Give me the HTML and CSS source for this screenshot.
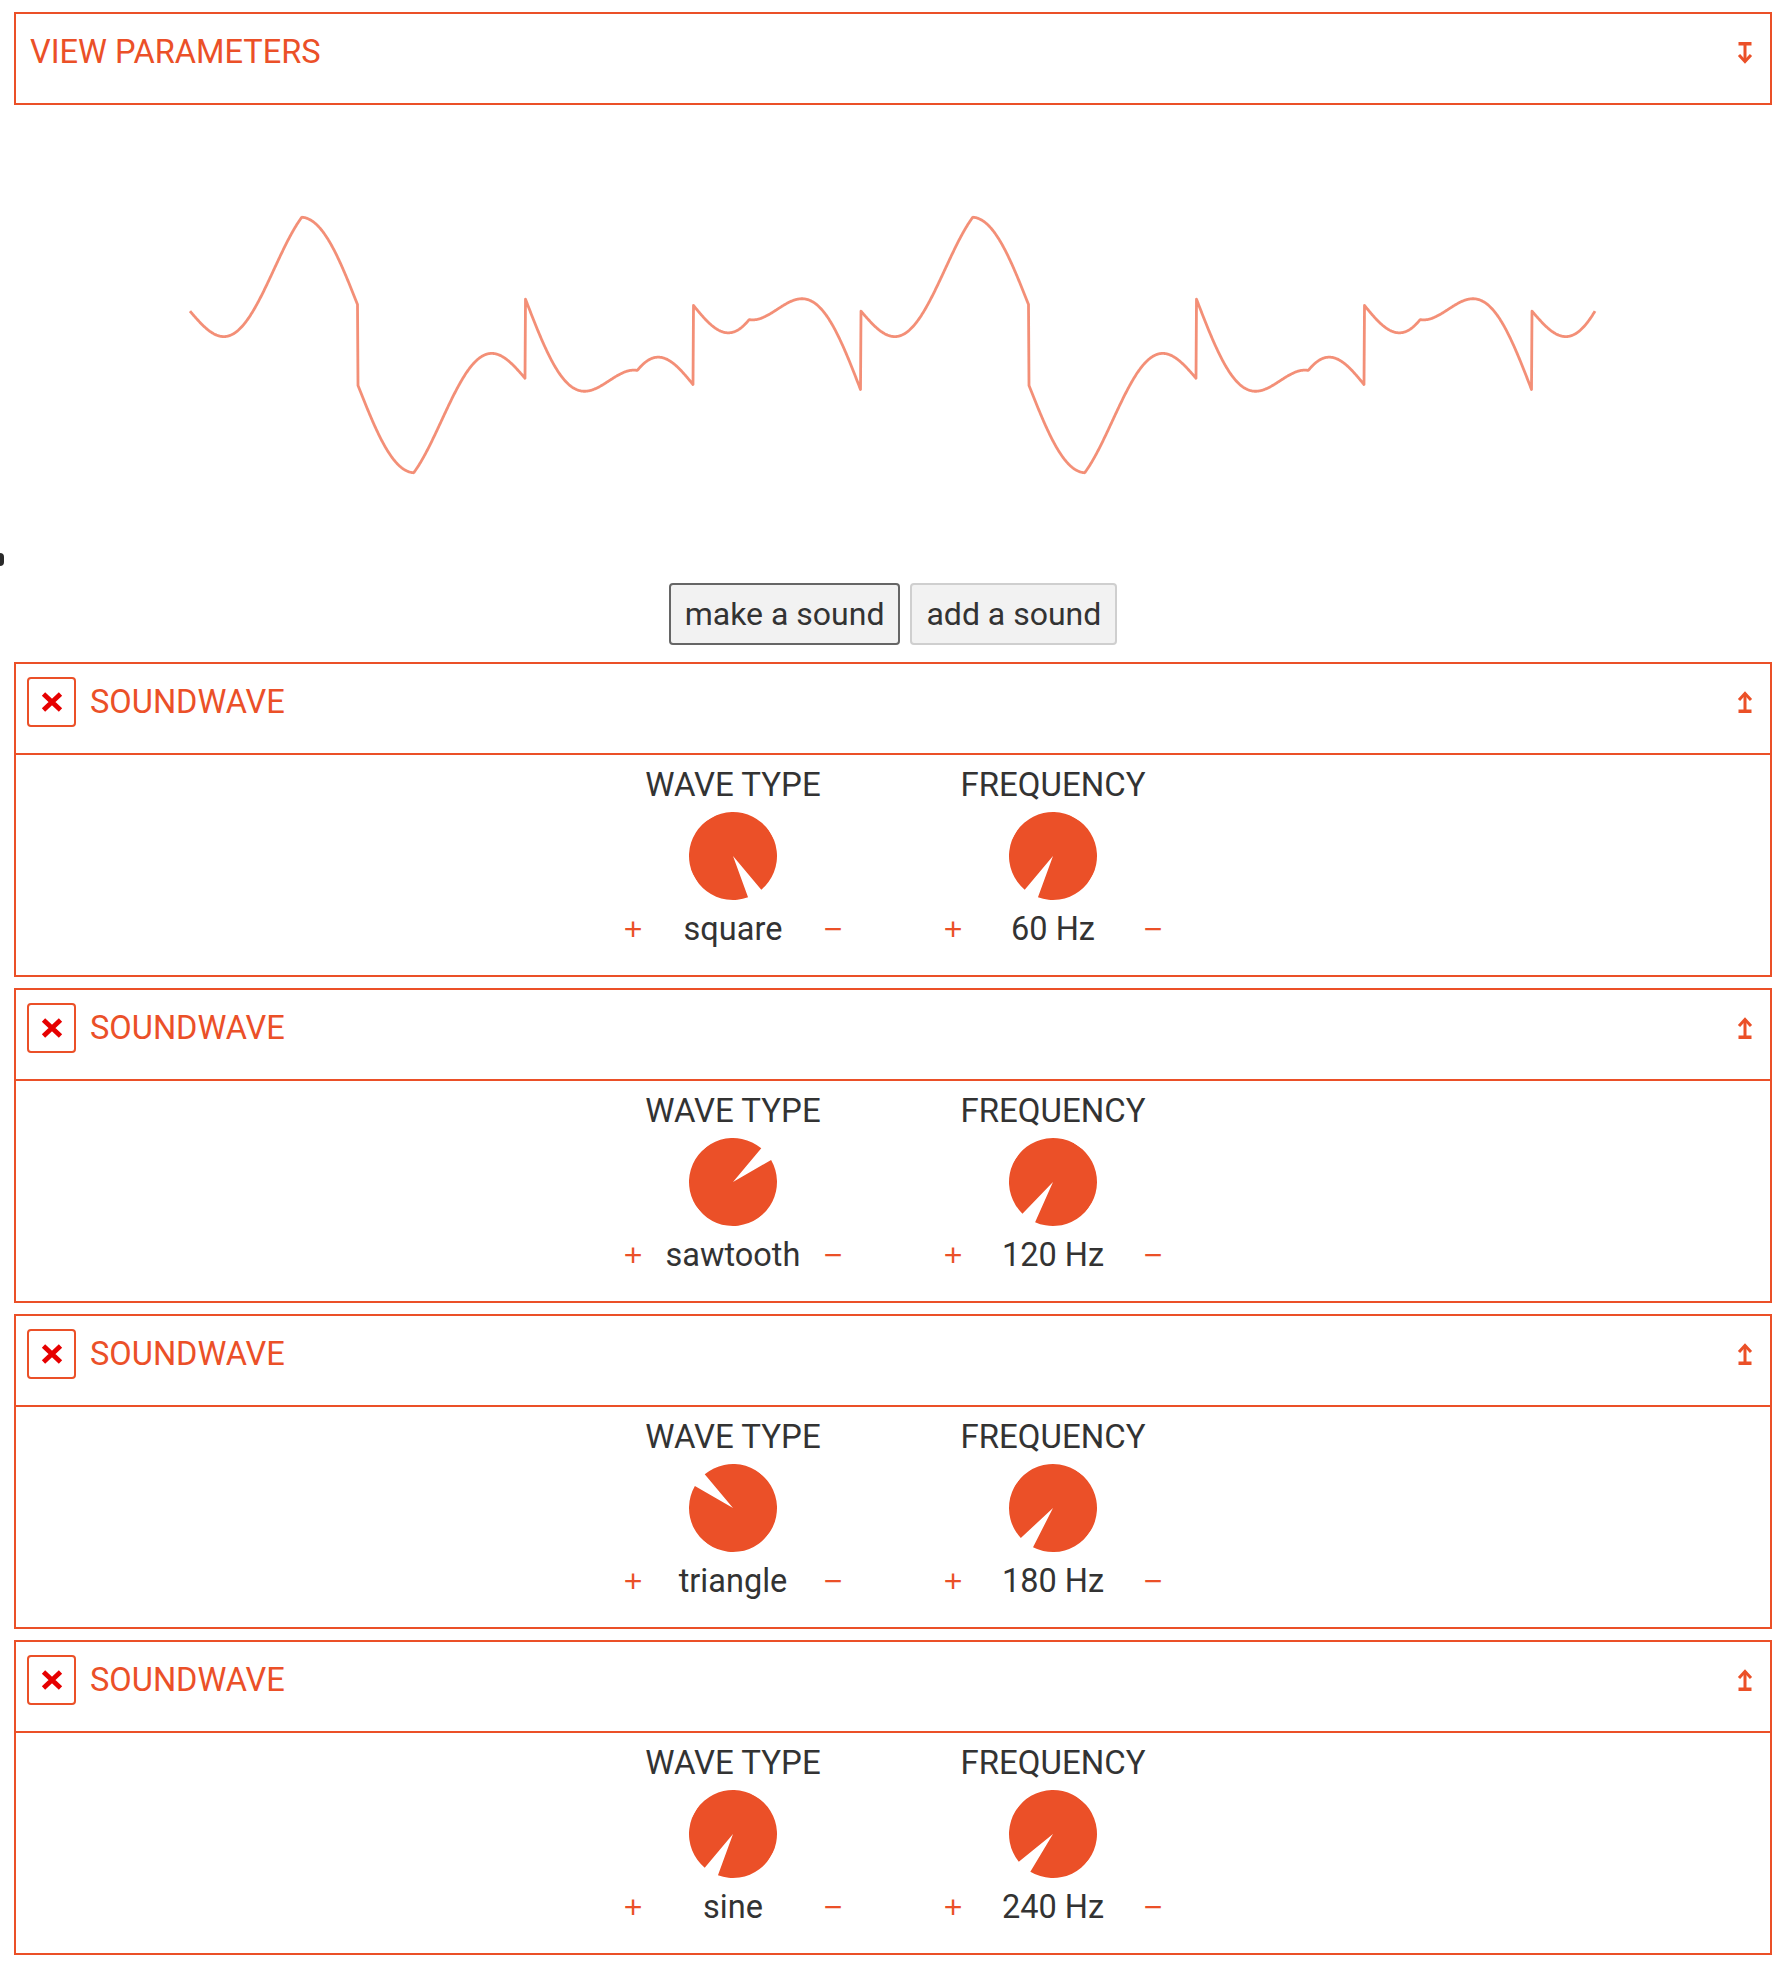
FILE: index.html
```html
<!DOCTYPE html>
<html lang="en">
<head>
<meta charset="utf-8">
<title>Soundwaves</title>
<link rel="stylesheet" href="styles.css">
</head>
<body>
<span class="edge-mark" aria-hidden="true"></span>
<main class="app">
  <section class="panel">
    <header class="panel-head panel-head--view">
      <h2 class="panel-title">VIEW PARAMETERS</h2>
      <svg class="toggle" viewBox="0 0 14 21" aria-hidden="true"><rect x="0.5" y="0" width="13" height="3.5"/><rect x="5.5" y="3" width="3" height="15"/><polyline points="1,13 7,19.5 13,13"/></svg>
    </header>
  </section>

  <div class="scope">
    <svg class="wave" viewBox="0 0 1758 478" aria-hidden="true"><path id="wave-path" class="wave-line" d=""/></svg>
  </div>

  <div class="actions">
    <button class="btn btn--focus" type="button">make a sound</button>
    <button class="btn" type="button">add a sound</button>
  </div>

  <section class="panel">
    <header class="panel-head">
      <button class="close" type="button" aria-label="remove"><svg viewBox="0 0 22 20"><path d="M2.5 2 L19.5 18 M19.5 2 L2.5 18"/></svg></button>
      <h2 class="panel-title">SOUNDWAVE</h2>
      <svg class="toggle" viewBox="0 0 14 21" aria-hidden="true"><rect x="0.5" y="17.5" width="13" height="3.5"/><rect x="5.5" y="3" width="3" height="15"/><polyline points="1,8 7,1.5 13,8"/></svg>
    </header>
    <div class="panel-body">
      <div class="control">
        <div class="control-label">WAVE TYPE</div>
        <svg class="knob" viewBox="0 0 88 88" style="transform: rotate(150deg)"><path d="M44 44 L51.64 0.67 A44 44 0 1 1 36.36 0.67 Z"/></svg>
        <div class="stepper"><span class="step">+</span><span class="value">square</span><span class="step">−</span></div>
      </div>
      <div class="control">
        <div class="control-label">FREQUENCY</div>
        <svg class="knob" viewBox="0 0 88 88" style="transform: rotate(210deg)"><path d="M44 44 L51.64 0.67 A44 44 0 1 1 36.36 0.67 Z"/></svg>
        <div class="stepper"><span class="step">+</span><span class="value">60 Hz</span><span class="step">−</span></div>
      </div>
    </div>
  </section>

  <section class="panel">
    <header class="panel-head">
      <button class="close" type="button" aria-label="remove"><svg viewBox="0 0 22 20"><path d="M2.5 2 L19.5 18 M19.5 2 L2.5 18"/></svg></button>
      <h2 class="panel-title">SOUNDWAVE</h2>
      <svg class="toggle" viewBox="0 0 14 21" aria-hidden="true"><rect x="0.5" y="17.5" width="13" height="3.5"/><rect x="5.5" y="3" width="3" height="15"/><polyline points="1,8 7,1.5 13,8"/></svg>
    </header>
    <div class="panel-body">
      <div class="control">
        <div class="control-label">WAVE TYPE</div>
        <svg class="knob" viewBox="0 0 88 88" style="transform: rotate(50deg)"><path d="M44 44 L51.64 0.67 A44 44 0 1 1 36.36 0.67 Z"/></svg>
        <div class="stepper"><span class="step">+</span><span class="value">sawtooth</span><span class="step">−</span></div>
      </div>
      <div class="control">
        <div class="control-label">FREQUENCY</div>
        <svg class="knob" viewBox="0 0 88 88" style="transform: rotate(214deg)"><path d="M44 44 L51.64 0.67 A44 44 0 1 1 36.36 0.67 Z"/></svg>
        <div class="stepper"><span class="step">+</span><span class="value">120 Hz</span><span class="step">−</span></div>
      </div>
    </div>
  </section>

  <section class="panel">
    <header class="panel-head">
      <button class="close" type="button" aria-label="remove"><svg viewBox="0 0 22 20"><path d="M2.5 2 L19.5 18 M19.5 2 L2.5 18"/></svg></button>
      <h2 class="panel-title">SOUNDWAVE</h2>
      <svg class="toggle" viewBox="0 0 14 21" aria-hidden="true"><rect x="0.5" y="17.5" width="13" height="3.5"/><rect x="5.5" y="3" width="3" height="15"/><polyline points="1,8 7,1.5 13,8"/></svg>
    </header>
    <div class="panel-body">
      <div class="control">
        <div class="control-label">WAVE TYPE</div>
        <svg class="knob" viewBox="0 0 88 88" style="transform: rotate(310deg)"><path d="M44 44 L51.64 0.67 A44 44 0 1 1 36.36 0.67 Z"/></svg>
        <div class="stepper"><span class="step">+</span><span class="value">triangle</span><span class="step">−</span></div>
      </div>
      <div class="control">
        <div class="control-label">FREQUENCY</div>
        <svg class="knob" viewBox="0 0 88 88" style="transform: rotate(217deg)"><path d="M44 44 L51.64 0.67 A44 44 0 1 1 36.36 0.67 Z"/></svg>
        <div class="stepper"><span class="step">+</span><span class="value">180 Hz</span><span class="step">−</span></div>
      </div>
    </div>
  </section>

  <section class="panel">
    <header class="panel-head">
      <button class="close" type="button" aria-label="remove"><svg viewBox="0 0 22 20"><path d="M2.5 2 L19.5 18 M19.5 2 L2.5 18"/></svg></button>
      <h2 class="panel-title">SOUNDWAVE</h2>
      <svg class="toggle" viewBox="0 0 14 21" aria-hidden="true"><rect x="0.5" y="17.5" width="13" height="3.5"/><rect x="5.5" y="3" width="3" height="15"/><polyline points="1,8 7,1.5 13,8"/></svg>
    </header>
    <div class="panel-body">
      <div class="control">
        <div class="control-label">WAVE TYPE</div>
        <svg class="knob" viewBox="0 0 88 88" style="transform: rotate(210deg)"><path d="M44 44 L51.64 0.67 A44 44 0 1 1 36.36 0.67 Z"/></svg>
        <div class="stepper"><span class="step">+</span><span class="value">sine</span><span class="step">−</span></div>
      </div>
      <div class="control">
        <div class="control-label">FREQUENCY</div>
        <svg class="knob" viewBox="0 0 88 88" style="transform: rotate(221deg)"><path d="M44 44 L51.64 0.67 A44 44 0 1 1 36.36 0.67 Z"/></svg>
        <div class="stepper"><span class="step">+</span><span class="value">240 Hz</span><span class="step">−</span></div>
      </div>
    </div>
  </section>
</main>
<script src="script.js"></script>
</body>
</html>
```

FILE: styles.css
```css
* { box-sizing: border-box; }

html, body {
  margin: 0;
  background: #fff;
}

body {
  position: relative;
  font-family: Roboto, "Liberation Sans", Arial, sans-serif;
  font-size: 32px;
  color: #333;
}

.edge-mark {
  position: absolute;
  left: 0;
  top: 553px;
  width: 4px;
  height: 13px;
  background: #2a2a2a;
  border-radius: 0 6px 6px 0;
}

.app {
  display: flex;
  flex-direction: column;
  padding: 12px 14px 0 14px;
}

.panel {
  border: 2px solid #eb5028;
}

.panel + .panel {
  margin-top: 11px;
}

.panel-head {
  box-sizing: content-box;
  height: 50px;
  padding: 13px 14px 26px 11px;
  display: flex;
  align-items: center;
  border-bottom: 2px solid #eb5028;
}

.panel-head--view {
  padding-left: 14px;
  border-bottom: 0;
}

.panel-title {
  margin: 0;
  font-size: 32.6px;
  font-weight: 400;
  line-height: normal;
  color: #eb5028;
  flex: 1;
}

.close {
  width: 49px;
  height: 50px;
  margin-right: 14px;
  padding: 0;
  border: 2px solid #eb5028;
  border-radius: 4px;
  background: #fff;
  display: grid;
  place-items: center;
}

.close svg {
  width: 22px;
  height: 20px;
  display: block;
  fill: none;
  stroke: #e60000;
  stroke-width: 4.8;
}

.toggle {
  width: 14px;
  height: 21px;
  margin-right: 4px;
  fill: #eb5028;
  stroke: none;
  overflow: visible;
}

.toggle polyline {
  fill: none;
  stroke: #eb5028;
  stroke-width: 3;
}

.scope {
  height: 478px;
}

.wave {
  display: block;
  width: 1758px;
  height: 478px;
}

.wave-line {
  fill: none;
  stroke: rgba(238, 90, 55, 0.68);
  stroke-width: 2.8;
  stroke-linejoin: round;
}

.actions {
  display: flex;
  justify-content: center;
  gap: 10px;
  margin-bottom: 17px;
}

.btn {
  height: 62px;
  padding: 0 14px;
  font: inherit;
  font-size: 32px;
  color: #333;
  background: #f2f2f2;
  border: 2px solid #cfcfcf;
  border-radius: 4px;
}

.btn--focus {
  border-color: #666;
}

.panel-body {
  display: flex;
  justify-content: center;
  gap: 70px;
  padding: 11px 0 27px;
}

.control {
  width: 250px;
  display: flex;
  flex-direction: column;
  align-items: center;
}

.control-label {
  font-size: 33px;
  line-height: 37.5px;
}

.knob {
  width: 88px;
  height: 88px;
  margin: 8px 0 11px;
  fill: #eb5028;
  display: block;
}

.stepper {
  width: 250px;
  display: grid;
  grid-template-columns: 50px 1fr 50px;
  text-align: center;
  line-height: 37.5px;
  font-size: 32.5px;
}

.step {
  font-family: "Liberation Sans", Arial, sans-serif;
  font-size: 32px;
  color: #eb5028;
}
```

FILE: script.js
```js
(function () {
  var path = document.getElementById('wave-path');
  if (!path) return;
  var period = 671;
  var x0 = 176;
  var yc = 240;
  var unit = 39.8;
  var tEnd = 2.094;

  function frac(v) { return v - Math.floor(v); }
  function square(t) { var f = frac(t); return (f < 0.25 || f >= 0.75) ? 1 : -1; }
  function saw(t) { return 1 - 2 * frac(2 * t); }
  function tri(t) { return 2 * Math.abs(2 * frac(3 * t + 0.5) - 1) - 1; }
  function sine(t) { return -1.1 * Math.sin(8 * Math.PI * t); }
  function drift(t) { return -0.15 * Math.cos(2 * Math.PI * t); }

  var d = [];
  var steps = Math.round(tEnd * period * 2);
  for (var i = 0; i <= steps; i++) {
    var t = i / (period * 2);
    var v = square(t) + saw(t) + tri(t) + sine(t) + drift(t);
    var x = x0 + t * period;
    var y = yc - unit * v;
    d.push((i ? 'L' : 'M') + x.toFixed(2) + ' ' + y.toFixed(2));
  }
  path.setAttribute('d', d.join(' '));
})();
```
